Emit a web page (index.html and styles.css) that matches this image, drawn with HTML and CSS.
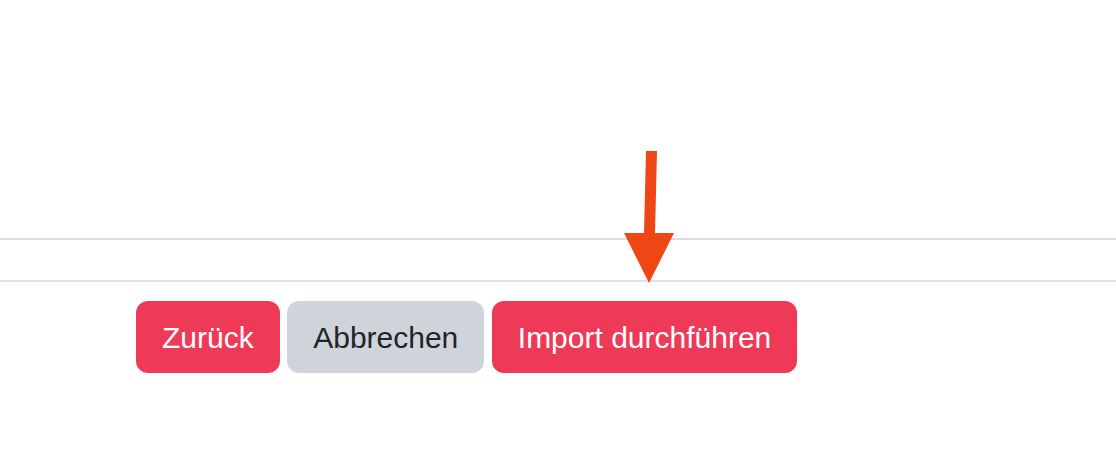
FILE: index.html
```html
<!DOCTYPE html>
<html lang="de">
<head>
    <meta charset="UTF-8">
    <meta name="viewport" content="width=device-width, initial-scale=1.0">
    <title>Import</title>
    <link rel="stylesheet" href="styles.css">
</head>
<body>
    <div class="page">
        <div class="top-space"></div>
        <div class="table-row"></div>
        <div class="actions">
            <button class="btn btn-primary">Zurück</button>
            <button class="btn btn-secondary">Abbrechen</button>
            <button class="btn btn-primary">Import durchführen</button>
        </div>

        <svg class="arrow" width="60" height="140" viewBox="0 0 60 140">
            <polygon points="22,0 33,0 31,82 50,82 25,132 0,82 20,82" fill="#ef4616"/>
        </svg>
    </div>
</body>
</html>
```

FILE: styles.css
```css
body {
    margin: 0;
    font-family: "Liberation Sans", Arial, sans-serif;
    background-color: #fff;
    color: #212529;
}
.page {
    position: relative;
    height: 470px;
}
.top-space {
    height: 238px;
}
.table-row {
    height: 40px;
    border-top: 2px solid #dddddd;
    border-bottom: 2px solid #dee1e5;
}
.actions {
    display: flex;
    gap: 7.5px;
    padding: 19px 0 0 136px;
}
.btn {
    height: 72px;
    padding: 2px 26px 0;
    font-family: inherit;
    font-size: 30px;
    border: none;
    border-radius: 12px;
    cursor: pointer;
}
.btn-primary {
    background-color: #ee3957;
    color: #fff;
}
.btn-secondary {
    background-color: #cfd4da;
    color: #212529;
}
.arrow {
    position: absolute;
    left: 624px;
    top: 151px;
}
```
